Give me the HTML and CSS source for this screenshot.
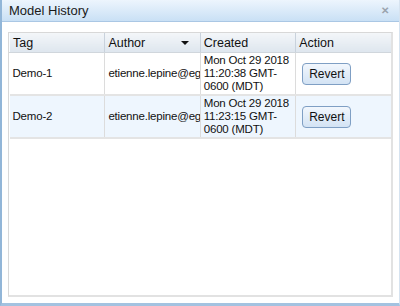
FILE: index.html
```html
<!DOCTYPE html>
<html lang="en">
<head>
    <meta charset="UTF-8">
    <title>Model History</title>
    <link rel="stylesheet" href="styles.css">
</head>
<body>
    <div class="dialog">
        <div class="titlebar">
            <span class="title">Model History</span>
            <span class="close">&#x2715;</span>
        </div>
        <div class="content">
            <div class="grid">
                <table>
                    <thead>
                        <tr>
                            <th>Tag</th>
                            <th><div class="sortable">Author <span class="arrow"></span></div></th>
                            <th>Created</th>
                            <th>Action</th>
                        </tr>
                    </thead>
                    <tbody>
                        <tr>
                            <td>Demo-1</td>
                            <td class="clip">etienne.lepine@eggsys.com</td>
                            <td>Mon Oct 29 2018 11:20:38 GMT-0600 (MDT)</td>
                            <td><button>Revert</button></td>
                        </tr>
                        <tr class="alt">
                            <td>Demo-2</td>
                            <td class="clip">etienne.lepine@eggsys.com</td>
                            <td>Mon Oct 29 2018 11:23:15 GMT-0600 (MDT)</td>
                            <td><button>Revert</button></td>
                        </tr>
                    </tbody>
                </table>
            </div>
        </div>
    </div>
</body>
</html>
```

FILE: styles.css
```css
body {
    margin: 0;
    font-family: "Liberation Sans", Arial, sans-serif;
    background: #fff;
}
.dialog {
    width: 400px;
    height: 306px;
    box-sizing: border-box;
    border-left: 2px solid #92b6d8;
    border-right: 1px solid #d6e3f0;
    border-bottom: 3px solid #a3c2e0;
    display: flex;
    flex-direction: column;
}
.titlebar {
    height: 21px;
    flex: none;
    display: flex;
    align-items: center;
    justify-content: space-between;
    padding: 0 10px 0 7px;
    background: linear-gradient(#edf5fd, #c9e0f5);
    border-bottom: 1px solid #aac7e4;
}
.title {
    font-size: 13px;
    color: #1a1a1a;
}
.close {
    font-size: 10px;
    color: #9aa3ad;
    font-weight: bold;
}
.content {
    flex: 1;
    padding: 10px 6px 6px 6px;
    display: flex;
}
.grid {
    flex: 1;
    border: 1px solid #d8d8d8;
    border-bottom: 2px solid #e2e2e2;
    border-right: 2px solid #e2e2e2;
}
table {
    width: 100%;
    border-collapse: collapse;
    table-layout: fixed;
    color: #111;
}
th {
    text-align: left;
    font-weight: normal;
    font-size: 12.5px;
    height: 19px;
    padding: 0 3px;
    background: linear-gradient(#f3f6f9, #dee6ee);
    border-right: 1px solid #c9d2dc;
    border-left: 1px solid #fafcfe;
    border-bottom: 1px solid #d0d6dc;
}
th:last-child { border-right: none; }
.sortable {
    display: flex;
    justify-content: space-between;
    align-items: center;
    padding-right: 8px;
}
.arrow {
    width: 0;
    height: 0;
    border-left: 4px solid transparent;
    border-right: 4px solid transparent;
    border-top: 4px solid #111;
}
td {
    font-size: 11.5px;
    letter-spacing: -0.2px;
    height: 39px;
    padding: 1px 3px;
    line-height: 13px;
    vertical-align: middle;
    border-right: 1px solid #dcdcdc;
    border-bottom: 2px solid #e4e4e4;
}
td:last-child { border-right: none; }
tr.alt td { background: #eef6fe; }
.clip {
    white-space: nowrap;
    overflow: hidden;
}
button {
    font-family: inherit;
    font-size: 12px;
    color: #111;
    margin-left: 3px;
    padding: 3px 6px;
    border: 1px solid #7f9fc4;
    border-radius: 4px;
    background: linear-gradient(#f2f7fd, #d3e3f4);
}
```
